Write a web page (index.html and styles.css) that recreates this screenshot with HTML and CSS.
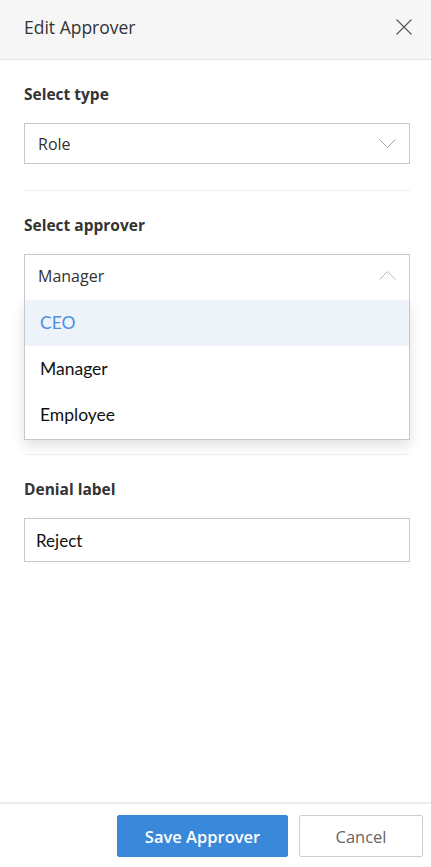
FILE: index.html
```html
<!DOCTYPE html>
<html>
<head>
<meta charset="utf-8">
<link rel="stylesheet" href="styles.css">
</head>
<body>
<div class="panel">
  <div class="header">
    <span class="title">Edit Approver</span>
    <svg class="close" width="16" height="16" viewBox="0 0 16 16"><path d="M0.5 0.5L15.5 15.5M15.5 0.5L0.5 15.5" stroke="#555" stroke-width="1.1" fill="none"/></svg>
  </div>
  <div class="body">
    <div class="section">
      <div class="label">Select type</div>
      <div class="select">
        <span class="value">Role</span>
        <svg class="chev" width="17" height="9" viewBox="0 0 17 9"><path d="M0.5 0.5L8.5 8.5L16.5 0.5" stroke="#a3a8b4" stroke-width="1" fill="none"/></svg>
      </div>
    </div>
    <div class="section">
      <div class="label">Select approver</div>
      <div class="combo">
        <div class="select open">
          <span class="value">Manager</span>
          <svg class="chev" width="17" height="9" viewBox="0 0 17 9"><path d="M0.5 8.5L8.5 0.5L16.5 8.5" stroke="#b4b8c2" stroke-width="1" fill="none"/></svg>
        </div>
        <ul class="menu">
          <li class="item active">CEO</li>
          <li class="item">Manager</li>
          <li class="item">Employee</li>
        </ul>
      </div>
      <div class="label second"></div>
      <div class="input"></div>
    </div>
    <div class="section">
      <div class="label">Denial label</div>
      <div class="input">Reject</div>
    </div>
  </div>
  <div class="footer">
    <button class="btn primary">Save Approver</button>
    <button class="btn secondary">Cancel</button>
  </div>
</div>
</body>
</html>
```
FILE: styles.css
```css
html, body {
  margin: 0;
  padding: 0;
  background: #fff;
}
body {
  font-family: "Open Sans", "Liberation Sans", sans-serif;
  color: #333;
}
.panel {
  width: 431px;
  height: 867px;
  display: flex;
  flex-direction: column;
}
.header {
  height: 59px;
  background: #f6f6f6;
  border-bottom: 1px solid #e3e3e3;
  display: flex;
  align-items: center;
  justify-content: space-between;
  padding: 0 19px 0 24px;
  box-sizing: content-box;
}
.title {
  font-size: 17.5px;
  color: #333;
  margin-top: -6px;
}
.close {
  display: block;
  margin-top: -5px;
}
.body {
  flex: 1;
  padding: 0 21px 0 24px;
}
.section {
  padding: 24px 0 26px;
  border-bottom: 1px solid #efefef;
}
.section:last-child {
  border-bottom: none;
}
.label {
  font-size: 15.5px;
  font-weight: 700;
  color: #333;
  line-height: 20px;
  height: 20px;
}
.label.second {
  margin-top: 45px;
}
.select {
  margin-top: 19px;
  height: 41px;
  border: 1px solid #c8c8cc;
  box-sizing: border-box;
  display: flex;
  align-items: center;
  justify-content: space-between;
  padding: 0 13px 0 13px;
  font-size: 16px;
  color: #333;
}
.chev {
  display: block;
}
.combo {
  position: relative;
}
.select.open {
  height: 46px;
  border-bottom: none;
  padding-bottom: 4px;
}
.menu {
  position: absolute;
  left: 0;
  right: 0;
  top: 46px;
  margin: 0;
  padding: 0 0 1px;
  list-style: none;
  background: #fff;
  border: 1px solid #c8c8cc;
  border-top: none;
  box-shadow: 0 6px 12px rgba(0, 0, 0, 0.12);
  z-index: 2;
}
.item {
  height: 46px;
  line-height: 46px;
  padding-left: 15px;
  font-family: "Lato", "Liberation Sans", sans-serif;
  font-size: 17.5px;
  color: #111;
}
.item.active {
  background: #eef3fa;
  color: #4a8fe0;
}
.input {
  margin-top: 19px;
  height: 44px;
  border: 1px solid #c8c8cc;
  box-sizing: border-box;
  display: flex;
  align-items: center;
  padding-left: 11px;
  font-family: "Lato", "Liberation Sans", sans-serif;
  font-size: 17px;
  color: #111;
}
.footer {
  height: 65px;
  border-top: 2px solid #ececec;
  display: flex;
  justify-content: flex-end;
  align-items: flex-start;
  padding: 11px 8px 0 0;
  box-sizing: border-box;
  gap: 11px;
}
.btn {
  height: 42px;
  font-family: "Open Sans", "Liberation Sans", sans-serif;
  font-size: 16.5px;
  border-radius: 2px;
  cursor: pointer;
}
.primary {
  width: 171px;
  background: #3a88da;
  border: 1px solid #3a88da;
  color: #fff;
  font-weight: 600;
}
.secondary {
  width: 124px;
  background: #fff;
  border: 1px solid #cfcfcf;
  color: #666;
}
```
